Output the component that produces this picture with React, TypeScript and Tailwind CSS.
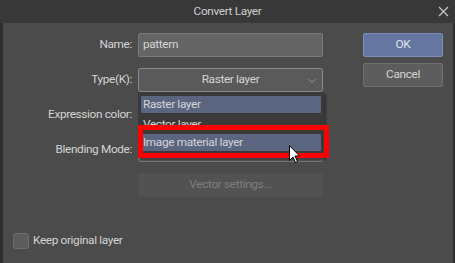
import { ChevronDown } from 'lucide-react'

const rowLabel = 'w-[135px] pr-[6px] text-right'

function Row({ label, children }: { label: string; children: React.ReactNode }) {
  return (
    <div className="flex items-center h-[24px]">
      <div className={rowLabel}>{label}</div>
      <div className="w-[185px] h-full">{children}</div>
    </div>
  )
}

export default function App() {
  return (
    <div className="relative w-[455px] h-[263px] overflow-hidden bg-[#2e2e2e] font-['Roboto',sans-serif] text-[11.8px] tracking-[-0.35px] text-[#d4d4d4] leading-none">
      {/* title bar */}
      <div className="relative h-[23px] bg-[#383838] flex items-center justify-center text-[#cdcdcd]">
        Convert Layer
        <svg className="absolute right-[6px] top-[6px]" width="11" height="11" viewBox="0 0 11 11">
          <path d="M1 1L10 10M10 1L1 10" stroke="#c4c4c4" strokeWidth="1.3" />
        </svg>
      </div>

      {/* body */}
      <div className="ml-[3px] mr-[2px] h-[240px] bg-[#4b4b4b] flex flex-col">
        <div className="flex pt-[10px]">
          <div className="flex flex-col gap-[11px]">
            <Row label="Name:">
              <div className="h-full rounded-[2px] border border-[#7a7a7a] bg-[#646464] flex items-center px-[4px]">pattern</div>
            </Row>
            <Row label="Type(K):">
              <div className="relative h-full rounded-[2px] border border-[#8a8a8a] bg-[#5a5a5a] flex items-center justify-center">
                Raster layer
                <ChevronDown className="absolute right-[4px] top-[6px]" size={12} strokeWidth={1.2} color="#c8c8c8" />
              </div>
            </Row>
            <Row label="Expression color:">
              <div className="h-full rounded-[2px] border border-[#6a6a6a] bg-[#5a5a5a]" />
            </Row>
            <Row label="Blending Mode:">
              <div className="h-full rounded-[2px] border border-[#7a7a7a] bg-[#5a5a5a] flex items-center justify-center">Normal</div>
            </Row>
            <Row label="">
              <div className="h-full rounded-[2px] bg-[#525252] flex items-center justify-center text-[#7e7e7e]">Vector settings...</div>
            </Row>
          </div>
          <div className="ml-[40px] flex flex-col gap-[6px]">
            <div className="w-[80px] h-[24px] rounded-[2px] border border-[#7d8fb8] bg-[#6577a1] flex items-center justify-center text-[#e2e6ee]">OK</div>
            <div className="w-[80px] h-[24px] rounded-[2px] border border-[#707070] bg-[#5d5d5d] flex items-center justify-center">Cancel</div>
          </div>
        </div>

        <div className="mt-auto mb-[14px] ml-[10px] flex items-center gap-[4px]">
          <div className="w-[16px] h-[16px] rounded-[3px] border border-[#6e6e6e] bg-[#5c5c5c]" />
          <span>Keep original layer</span>
        </div>
      </div>

      {/* open dropdown list */}
      <div className="absolute left-[138px] top-[92px] w-[186px] h-[66px] bg-[#3a3a3a] shadow-[2px_2px_2px_rgba(0,0,0,0.35)] flex flex-col gap-[2px] px-[3px] pt-[4px]">
        <div className="h-[17px] rounded-[1px] bg-[#5c6580] flex items-center px-[2px]">Raster layer</div>
        <div className="h-[17px] flex items-center px-[2px] pt-[3px]">Vector layer</div>
        <div className="h-[17px] rounded-[1px] bg-[#5c6580] flex items-center px-[2px]">Image material layer</div>
      </div>

      {/* highlight frame */}
      <div className="absolute left-[138px] top-[125px] w-[191px] h-[33px] border-[5px] border-[#ff0000]" />

      {/* mouse pointer */}
      <svg className="absolute left-[289px] top-[145px]" width="12" height="19" viewBox="0 0 12 19">
        <path d="M0.5 0.5V15.5L4 12L6.5 17.5L8.5 16.5L6 11H10.5Z" fill="#fff" stroke="#000" strokeWidth="1" />
      </svg>
    </div>
  )
}
